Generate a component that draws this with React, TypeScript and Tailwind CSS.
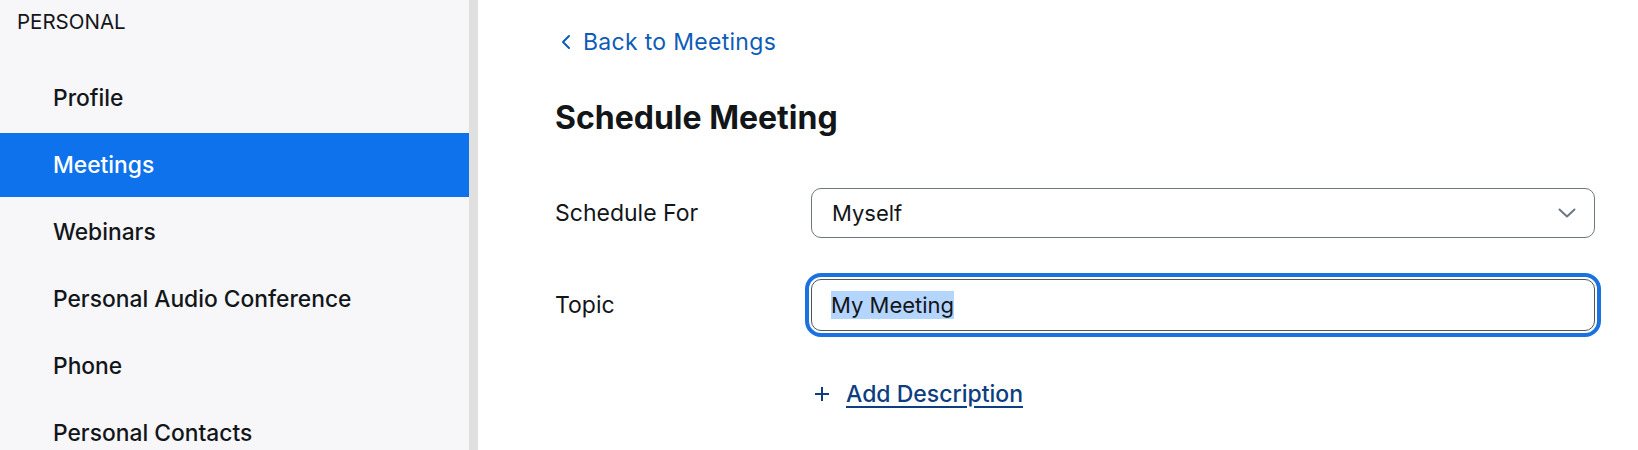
import React from "react";

const items = ["Profile", "Meetings", "Webinars", "Personal Audio Conference", "Phone", "Personal Contacts"];

export default function App() {
  return (
    <div className="flex h-[450px] w-[1638px] overflow-hidden bg-white text-[#131619]" style={{ fontFamily: "Inter, 'Noto Sans', sans-serif" }}>
      <aside className="w-[469px] shrink-0 bg-[#f7f7fa]">
        <div className="pl-[17px] pt-[10px] text-[20.5px] leading-[24px] font-normal text-[#131619]">PERSONAL</div>
        <nav className="mt-[32px] flex flex-col gap-[3px]">
          {items.map((it) => (
            <div
              key={it}
              className={
                it === "Meetings"
                  ? "flex h-[64px] items-center bg-[#0e72ed] pl-[53px] text-[22.8px] font-medium text-white"
                  : "flex h-[64px] items-center pl-[53px] text-[22.8px] font-medium text-[#131619]"
              }
            >
              {it}
            </div>
          ))}
        </nav>
      </aside>
      <div className="w-[9px] shrink-0 bg-[#e0e0e0]" />
      <main className="flex-1 pl-[77px] pt-[28px]">
        <div className="flex h-[28px] items-center text-[23px] text-[#0e5cb8]">
          <svg width="14" height="16" viewBox="0 0 14 16" className="ml-[4px] mr-[10px]" fill="none">
            <path d="M10 2 L4 8 L10 14" stroke="#0e5cb8" strokeWidth="2" strokeLinecap="round" strokeLinejoin="round" />
          </svg>
          <span className="tracking-[0.3px]">Back to Meetings</span>
        </div>
        <h1 className="mt-[42px] text-[32px] leading-[40px] font-bold text-[#131619]">Schedule Meeting</h1>
        <div className="mt-[50px] flex items-center">
          <div className="w-[256px] text-[23px] text-[#131619]">Schedule For</div>
          <div className="flex h-[50px] w-[784px] items-center justify-between rounded-[10px] border border-[#6e7680] pl-[20px] pr-[18px] text-[22px] text-[#131619]">
            <span>Myself</span>
            <svg width="18" height="10" viewBox="0 0 18 10" fill="none">
              <path d="M1.5 1.5 L9 8.5 L16.5 1.5" stroke="#6e7680" strokeWidth="2" strokeLinecap="round" strokeLinejoin="round" />
            </svg>
          </div>
        </div>
        <div className="mt-[41px] flex items-center">
          <div className="w-[256px] text-[23px] text-[#131619]">Topic</div>
          <div className="flex h-[52px] w-[784px] items-center rounded-[10px] border border-[#50555c] pl-[19px] text-[22px] text-[#131619] outline-[4px] outline-solid outline-[#1a72e0] outline-offset-[2px]">
            <span className="bg-[#b4d5fe] leading-[28px]">My Meeting</span>
          </div>
        </div>
        <div className="mt-[49px] ml-[256px] flex h-[28px] items-center text-[23px] font-medium text-[#0d3e80]">
          <svg width="16" height="16" viewBox="0 0 16 16" className="ml-[3px] mr-[16px]" fill="none">
            <path d="M8 1 V15 M1 8 H15" stroke="#0d3e80" strokeWidth="2" />
          </svg>
          <span className="underline decoration-[2px] underline-offset-[4px]">Add Description</span>
        </div>
      </main>
    </div>
  );
}
